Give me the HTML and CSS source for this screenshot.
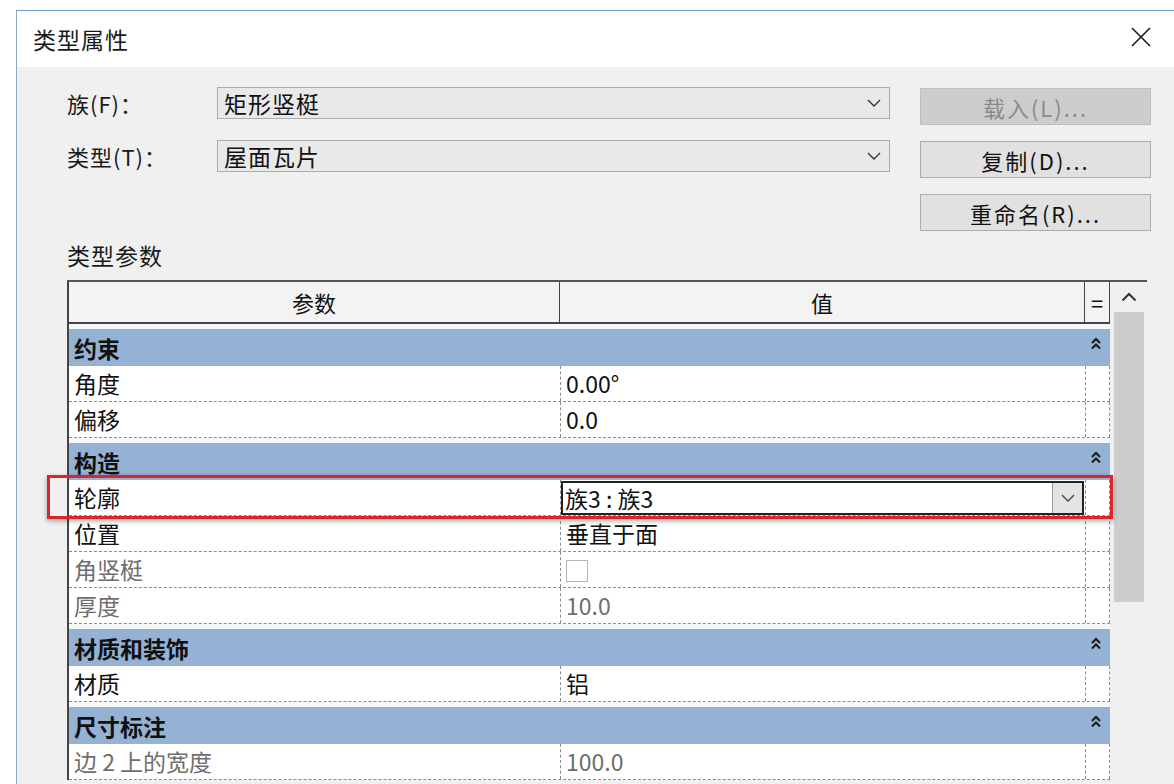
FILE: index.html
```html
<!DOCTYPE html>
<html lang="zh-CN">
<head>
  <meta charset="UTF-8" />
  <title>类型属性</title>
  <link rel="stylesheet" href="styles.css">
</head>
<body>
  <div class="dialog">
    <div class="titlebar">
      <span class="title">类型属性</span>
      <svg class="close" width="22" height="22" viewBox="0 0 22 22">
        <path d="M2 2 L20 20 M20 2 L2 20" stroke="#1a1a1a" stroke-width="1.6" fill="none"/>
      </svg>
    </div>

    <div class="content">
      <div class="top-form">
        <span class="form-label">族(F)：</span>
        <div class="combo">
          <span>矩形竖梃</span>
          <svg width="14" height="8" viewBox="0 0 14 8"><path d="M1 1 L7 7 L13 1" stroke="#333" stroke-width="1.4" fill="none"/></svg>
        </div>
        <button class="btn" disabled>载入(L)...</button>

        <span class="form-label">类型(T)：</span>
        <div class="combo">
          <span>屋面瓦片</span>
          <svg width="14" height="8" viewBox="0 0 14 8"><path d="M1 1 L7 7 L13 1" stroke="#333" stroke-width="1.4" fill="none"/></svg>
        </div>
        <button class="btn">复制(D)...</button>

        <span></span>
        <span></span>
        <button class="btn">重命名(R)...</button>
      </div>

      <div class="section-label">类型参数</div>

      <div class="grid-wrap">
        <div class="props">
          <div class="head">
            <div class="hcell c-name">参数</div>
            <div class="hcell c-value">值</div>
            <div class="hcell c-eq">=</div>
          </div>

          <div class="group"><span>约束</span><svg class="collapse" width="10" height="13" viewBox="0 0 10 13"><path d="M1 6 L5 2 L9 6 M1 11.5 L5 7.5 L9 11.5" stroke="#1a1a1a" stroke-width="2" fill="none"/></svg></div>
          <div class="row"><div class="c-name">角度</div><div class="c-value">0.00°</div><div class="c-eq"></div></div>
          <div class="row"><div class="c-name">偏移</div><div class="c-value">0.0</div><div class="c-eq"></div></div>

          <div class="group"><span>构造</span><svg class="collapse" width="10" height="13" viewBox="0 0 10 13"><path d="M1 6 L5 2 L9 6 M1 11.5 L5 7.5 L9 11.5" stroke="#1a1a1a" stroke-width="2" fill="none"/></svg></div>
          <div class="row picked">
            <div class="c-name">轮廓</div>
            <div class="c-value">
              <div class="cell-combo">
                <span>族3 : 族3</span>
                <span class="drop"><svg width="14" height="8" viewBox="0 0 14 8"><path d="M1 1 L7 7 L13 1" stroke="#444" stroke-width="1.3" fill="none"/></svg></span>
              </div>
            </div>
            <div class="c-eq"></div>
            <span class="highlight"></span>
          </div>
          <div class="row"><div class="c-name">位置</div><div class="c-value">垂直于面</div><div class="c-eq"></div></div>
          <div class="row muted"><div class="c-name">角竖梃</div><div class="c-value"><span class="check"></span></div><div class="c-eq"></div></div>
          <div class="row muted"><div class="c-name">厚度</div><div class="c-value">10.0</div><div class="c-eq"></div></div>

          <div class="group"><span>材质和装饰</span><svg class="collapse" width="10" height="13" viewBox="0 0 10 13"><path d="M1 6 L5 2 L9 6 M1 11.5 L5 7.5 L9 11.5" stroke="#1a1a1a" stroke-width="2" fill="none"/></svg></div>
          <div class="row"><div class="c-name">材质</div><div class="c-value">铝</div><div class="c-eq"></div></div>

          <div class="group"><span>尺寸标注</span><svg class="collapse" width="10" height="13" viewBox="0 0 10 13"><path d="M1 6 L5 2 L9 6 M1 11.5 L5 7.5 L9 11.5" stroke="#1a1a1a" stroke-width="2" fill="none"/></svg></div>
          <div class="row muted"><div class="c-name">边 2 上的宽度</div><div class="c-value">100.0</div><div class="c-eq"></div></div>
        </div>

        <div class="vscroll">
          <div class="arrow">
            <svg width="16" height="10" viewBox="0 0 16 10"><path d="M1.5 8.5 L8 2 L14.5 8.5" stroke="#333" stroke-width="2" fill="none"/></svg>
          </div>
          <div class="thumb"></div>
        </div>
      </div>
    </div>
  </div>
</body>
</html>
```

FILE: styles.css
```css
html, body {
  margin: 0;
  height: 100%;
  overflow: hidden;
}
body {
  background: #fff;
  font-family: "Noto Sans CJK SC", "Noto Sans", sans-serif;
  color: #111;
}
.dialog {
  margin: 10px 0 0 16px;
  width: 1157px;
  height: 780px;
  border-top: 1px solid #6f9cc4;
  border-left: 1px solid #8ba9c6;
  background: #f0f0f0;
}
.titlebar {
  height: 56px;
  background: #fff;
  display: flex;
  align-items: center;
  justify-content: space-between;
  padding: 0 22px 0 16px;
}
.title {
  font-size: 23px;
  letter-spacing: 1px;
  color: #1a1a1a;
}
.close {
  margin-top: -4px;
}
.content {
  padding: 20px 0 0 50px;
}
.top-form {
  display: grid;
  grid-template-columns: 120px 673px 231px;
  grid-auto-rows: 38px;
  column-gap: 30px;
  row-gap: 15px;
}
.form-label {
  font-size: 22px;
  line-height: 32px;
  letter-spacing: 1px;
  color: #1a1a1a;
}
.combo {
  height: 32px;
  box-sizing: border-box;
  border: 1px solid #acacac;
  background: #e9e9e9;
  display: flex;
  align-items: center;
  justify-content: space-between;
  padding: 0 8px 0 6px;
  font-size: 23px;
  letter-spacing: 1px;
}
.btn {
  height: 37px;
  margin-top: 1px;
  border: 1px solid #adadad;
  background: #e1e1e1;
  font-family: inherit;
  font-size: 22px;
  color: #111;
  letter-spacing: 2px;
  padding: 0;
}
.btn:disabled {
  background: #cdcdcd;
  border-color: #bfbfbf;
  color: #8a8a8a;
}
.section-label {
  font-size: 23px;
  line-height: 28px;
  margin: 10px 0 11px;
  letter-spacing: 1px;
  color: #1a1a1a;
}
.grid-wrap {
  display: flex;
  border-top: 2px solid #555;
  width: 1080px;
}
.props {
  width: 1041px;
  border-left: 2px solid #444;
  background: #f4f8fb;
}
.head {
  display: flex;
  height: 40px;
  background: #f3f3f3;
  border-bottom: 2px solid #444;
}
.hcell {
  display: flex;
  align-items: center;
  justify-content: center;
  font-size: 22px;
  border-right: 1px solid #444;
}
.c-name {
  width: 491px;
  box-sizing: border-box;
}
.c-value {
  width: 525px;
  box-sizing: border-box;
}
.c-eq {
  width: 25px;
  box-sizing: border-box;
}
.group {
  margin-top: 5px;
  height: 37px;
  background: #95b2d5;
  display: flex;
  align-items: center;
  justify-content: space-between;
  padding: 0 9px 0 5px;
  font-size: 23px;
  font-weight: bold;
}
.group .collapse {
  margin-top: -8px;
}
.row {
  position: relative;
  display: flex;
  height: 36px;
  box-sizing: border-box;
  background: #fff;
  border-bottom: 1px dashed #8c8c8c;
  font-size: 23px;
}
.row .c-name {
  padding-left: 5px;
  line-height: 35px;
}
.row .c-value {
  border-left: 1px dashed #8c8c8c;
  padding-left: 5px;
  line-height: 35px;
}
.row .c-eq {
  border-left: 1px dashed #8c8c8c;
  border-right: 1px dashed #8c8c8c;
}
.row.muted {
  color: #6e6e6e;
}
.check {
  display: inline-block;
  width: 22px;
  height: 22px;
  box-sizing: border-box;
  border: 1px solid #b5b5b5;
  background: #fff;
  vertical-align: middle;
  margin-top: -4px;
}
.picked .c-value {
  padding: 1px 1px 0 0;
}
.cell-combo {
  height: 34px;
  box-sizing: border-box;
  border: 2px solid #222;
  display: flex;
  justify-content: space-between;
  line-height: 30px;
  padding-left: 2px;
  background: #fff;
}
.cell-combo .drop {
  width: 29px;
  background: #e3e3e3;
  border-left: 1px solid #9a9a9a;
  display: flex;
  align-items: center;
  justify-content: center;
}
.highlight {
  position: absolute;
  z-index: 2;
  left: -22px;
  top: -5px;
  width: 1066px;
  height: 44px;
  box-sizing: border-box;
  border: 3px solid #d9252b;
  box-shadow: 0 2px 5px rgba(0, 0, 0, 0.35);
  pointer-events: none;
}
.vscroll {
  width: 37px;
  background: #f0f0f0;
  display: flex;
  flex-direction: column;
  align-items: center;
}
.arrow {
  height: 30px;
  display: flex;
  align-items: center;
  justify-content: center;
}
.thumb {
  width: 30px;
  height: 290px;
  background: #cdcdcd;
}
```
